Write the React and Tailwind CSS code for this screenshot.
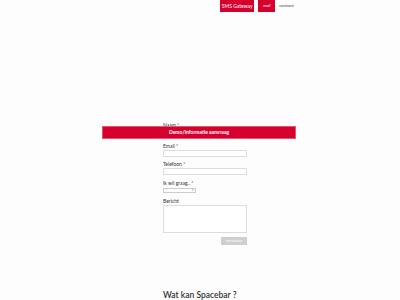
const Field = ({ label, children }) => (
  <div className="flex flex-col">
    <label className="text-[5px] leading-[6px] h-[6px] text-[#333] whitespace-nowrap">{label}</label>
    <div className="mt-[1px]">{children}</div>
  </div>
);

const App = () => {
  return (
    <div
      className="relative w-[400px] h-[300px] overflow-hidden bg-[#fdfdfd]"
      style={{ fontFamily: 'Lato, "Noto Sans", sans-serif' }}
    >
      {/* Navigatie */}
      <nav className="flex justify-end items-start h-[12px] pr-[106px]">
        <a className="h-[12px] bg-[#d6002f] text-white text-[5px] leading-[12px] w-[34px] text-center whitespace-nowrap shrink-0">
          SMS Gateway
        </a>
        <a className="h-[12px] ml-[4px] bg-[#d6002f] text-white text-[4px] leading-[12px] w-[17px] text-center shrink-0">
          mail
        </a>
        <a className="h-[12px] ml-[4px] text-[#444] text-[4.5px] leading-[11px] whitespace-nowrap shrink-0">contact</a>
      </nav>

      {/* Formulier */}
      <div className="ml-[163px] w-[84px] mt-[110px] flex flex-col">
        <Field label="Naam *">
          <div className="h-[6px] border border-[#ddd] bg-white" />
        </Field>
        <div className="mt-[8px]">
          <Field label="Email *">
            <div className="h-[7px] border border-[#ddd] bg-white" />
          </Field>
        </div>
        <div className="mt-[4px]">
          <Field label="Telefoon *">
            <div className="h-[7px] border border-[#ddd] bg-white" />
          </Field>
        </div>
        <div className="mt-[5px]">
          <Field label="Ik wil graag.. *">
            <div className="w-[33px] h-[5px] border border-[#ccc] bg-white flex items-center justify-between px-[1px] mt-[1px]">
              <span className="text-[3px] leading-[3px] text-[#777]">–</span>
              <span className="text-[3px] leading-[3px] text-[#777]">▾</span>
            </div>
          </Field>
        </div>
        <div className="mt-[5px]">
          <Field label="Bericht">
            <div className="h-[28px] border border-[#ddd] bg-white" />
          </Field>
        </div>
        <div className="flex justify-end mt-[4px]">
          <button className="w-[26px] h-[8px] bg-[#cfcfcf] text-white text-[4px] leading-[8px] text-center">
            versturen
          </button>
        </div>
      </div>

      <h2 className="ml-[163px] mt-[45px] text-[8.5px] leading-[10px] font-semibold text-[#333] whitespace-nowrap">
        Wat kan Spacebar ?
      </h2>

      {/* Aanvraag banner */}
      <div className="absolute left-[102px] top-[126px] w-[194px] h-[13px] bg-[#d6002f] border border-[#e8556f] flex items-center justify-center">
        <span className="text-white text-[5px] font-bold">Demo/informatie aanvraag</span>
      </div>
    </div>
  );
};

export default App;
